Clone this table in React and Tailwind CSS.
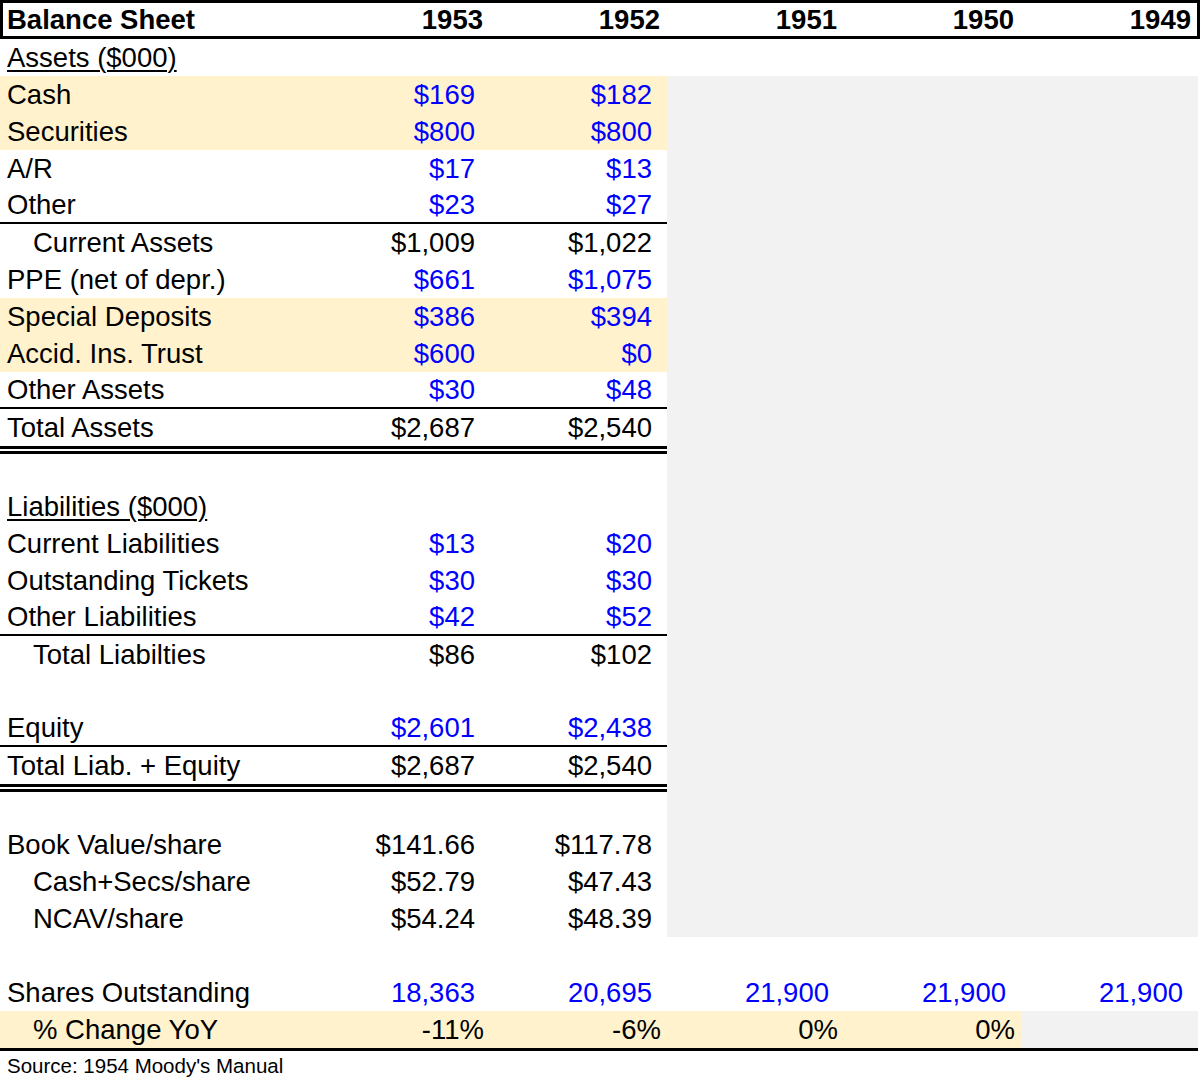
import React from "react";

const FONT = "font-['Liberation_Sans',Arial,sans-serif]";

const BLUE = "text-[#0000ff]";

function Cell({ children, pad = "num", color = "" }) {
  return (
    <div
      className={`w-[177px] shrink-0 flex items-center justify-end ${
        pad === "num" ? "pr-[15px]" : "pr-[6px]"
      } ${color}`}
    >
      {children}
    </div>
  );
}

function Row({
  label,
  vals = [],
  rest = [],
  blue = false,
  beige = false,
  gray = false,
  indent = false,
  underline = false,
  line = "none",
  h = "h-[37px]",
  pad = "num",
}) {
  const color = blue ? BLUE : "text-black";
  let leftBorder = "";
  if (line === "single") leftBorder = "border-b-2 border-black";
  if (line === "double") leftBorder = "border-b-[8px] border-double border-black";
  return (
    <div className={`flex ${h}`}>
      <div
        className={`flex w-[667px] shrink-0 ${beige ? "bg-[#fff2cc]" : ""} ${leftBorder}`}
      >
        <div
          className={`w-[313px] shrink-0 flex items-center ${
            indent ? "pl-[33px]" : "pl-[7px]"
          } text-black whitespace-nowrap`}
        >
          {label && (
            <span
              className={
                underline
                  ? "underline decoration-[2px] underline-offset-[3px]"
                  : ""
              }
            >
              {label}
            </span>
          )}
        </div>
        <Cell pad={pad} color={color}>{vals[0]}</Cell>
        <Cell pad={pad} color={color}>{vals[1]}</Cell>
      </div>
      <div className={`flex w-[531px] shrink-0 ${gray ? "bg-[#f2f2f2]" : ""}`}>
        <Cell pad={pad} color={color}>{rest[0]}</Cell>
        <Cell pad={pad} color={color}>{rest[1]}</Cell>
        <Cell pad={pad} color={color}>{rest[2]}</Cell>
      </div>
    </div>
  );
}

export default function App() {
  return (
    <div className={`w-[1200px] h-[1087px] bg-white ${FONT} text-[27.5px] leading-none text-black`}>
      {/* Header */}
      <div className="flex h-[39px] border-[3px] border-black font-bold">
        <div className="w-[309px] shrink-0 flex items-center pl-[4px] whitespace-nowrap">Balance Sheet</div>
        {["1953", "1952", "1951", "1950", "1949"].map((y) => (
          <div key={y} className="w-[177px] shrink-0 flex items-center justify-end pr-[6px]">
            {y}
          </div>
        ))}
      </div>

      <Row label="Assets ($000)" underline />
      <Row label="Cash" vals={["$169", "$182"]} blue beige gray />
      <Row label="Securities" vals={["$800", "$800"]} blue beige gray />
      <Row label="A/R" vals={["$17", "$13"]} blue gray />
      <Row label="Other" vals={["$23", "$27"]} blue gray line="single" />
      <Row label="Current Assets" vals={["$1,009", "$1,022"]} indent gray />
      <Row label="PPE (net of depr.)" vals={["$661", "$1,075"]} blue gray />
      <Row label="Special Deposits" vals={["$386", "$394"]} blue beige gray />
      <Row label="Accid. Ins. Trust" vals={["$600", "$0"]} blue beige gray />
      <Row label="Other Assets" vals={["$30", "$48"]} blue gray line="single" />
      <Row label="Total Assets" vals={["$2,687", "$2,540"]} gray line="double" h="h-[45px]" />
      <Row gray h="h-[34px]" />

      <Row label="Liabilities ($000)" underline gray />
      <Row label="Current Liabilities" vals={["$13", "$20"]} blue gray />
      <Row label="Outstanding Tickets" vals={["$30", "$30"]} blue gray />
      <Row label="Other Liabilities" vals={["$42", "$52"]} blue gray line="single" />
      <Row label="Total Liabilties" vals={["$86", "$102"]} indent gray />
      <Row gray />
      <Row label="Equity" vals={["$2,601", "$2,438"]} blue gray line="single" />
      <Row label="Total Liab. + Equity" vals={["$2,687", "$2,540"]} gray line="double" h="h-[45px]" />
      <Row gray h="h-[34px]" />

      <Row label="Book Value/share" vals={["$141.66", "$117.78"]} gray />
      <Row label="Cash+Secs/share" vals={["$52.79", "$47.43"]} indent gray />
      <Row label="NCAV/share" vals={["$54.24", "$48.39"]} indent gray />
      <Row />

      <Row
        label="Shares Outstanding"
        vals={["18,363", "20,695"]}
        rest={["21,900", "21,900", "21,900"]}
        blue
      />

      {/* % Change row */}
      <div className="flex h-[40px] w-[1198px] border-b-[3px] border-black">
        <div className="flex w-[1021px] shrink-0 bg-[#fff2cc]">
          <div className="w-[313px] shrink-0 flex items-center pl-[33px] whitespace-nowrap">% Change YoY</div>
          {["-11%", "-6%", "0%", "0%"].map((v, i) => (
            <div key={i} className="w-[177px] shrink-0 flex items-center justify-end pr-[6px]">
              {v}
            </div>
          ))}
        </div>
        <div className="w-[177px] shrink-0 bg-[#f2f2f2]" />
      </div>

      <div className="h-[30px] flex items-center pl-[7px] text-[20.5px] text-black">
        Source: 1954 Moody's Manual
      </div>
    </div>
  );
}
